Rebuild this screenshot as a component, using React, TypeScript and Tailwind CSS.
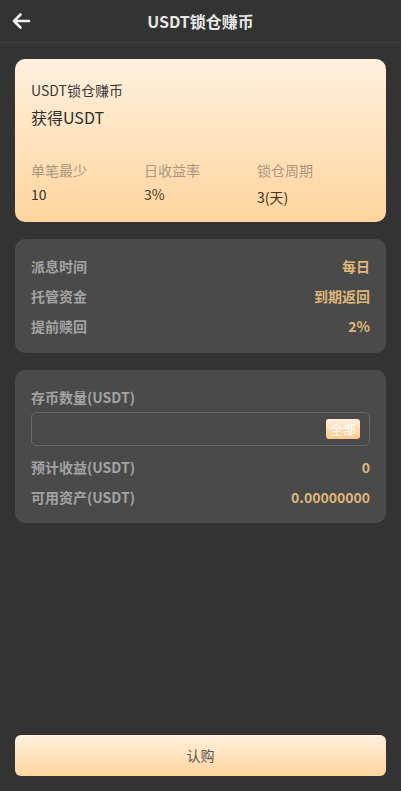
import React from "react";

export default function App() {
  const font = { fontFamily: '"Noto Sans CJK SC", "Noto Sans", sans-serif' };
  return (
    <div style={font} className="w-[401px] h-[791px] bg-[#333333] flex flex-col">
      <div className="relative h-[43px] border-b border-[#3f3f3f] flex items-center justify-center shrink-0">
        <svg className="absolute left-[11px] top-[12px]" width="20" height="18" viewBox="0 0 20 18" fill="none">
          <path d="M18 9H3M9.5 2.5L3 9l6.5 6.5" stroke="#f0f0f0" strokeWidth="2.6" strokeLinecap="round" strokeLinejoin="round" />
        </svg>
        <span className="text-[16px] font-bold text-[#e6e6e6] leading-none">USDT锁仓赚币</span>
      </div>

      <div className="mx-[15px] mt-[16px] h-[163px] rounded-[10px] bg-gradient-to-b from-[#fff0de] to-[#ffd59c] px-4 pt-[21px]">
        <div className="text-[14px] leading-[20px] text-[#3a3a3a]">USDT锁仓赚币</div>
        <div className="text-[16px] leading-[22px] text-[#2e2e2e] mt-[6px]">获得USDT</div>
        <div className="grid grid-cols-3 mt-[32px]">
          <div>
            <div className="text-[14px] leading-[20px] text-[#a89783]">单笔最少</div>
            <div className="text-[14px] leading-[20px] text-[#3b2f3a] mt-[4px]">10</div>
          </div>
          <div>
            <div className="text-[14px] leading-[20px] text-[#a89783]">日收益率</div>
            <div className="text-[14px] leading-[20px] text-[#4a3b2f] mt-[4px]">3%</div>
          </div>
          <div>
            <div className="text-[14px] leading-[20px] text-[#a89783]">锁仓周期</div>
            <div className="text-[14px] leading-[20px] text-[#3f3224] mt-[7px]">3(天)</div>
          </div>
        </div>
      </div>

      <div className="mx-[15px] mt-[17px] rounded-[10px] bg-[#4a4a4a] px-4 py-3">
        {[
          ["派息时间", "每日"],
          ["托管资金", "到期返回"],
          ["提前赎回", "2%"],
        ].map(([l, v]) => (
          <div key={l} className="h-[30px] flex items-center justify-between">
            <span className="text-[14px] font-bold text-[#a3a3a3]">{l}</span>
            <span className="text-[14px] font-bold text-[#dfb679]">{v}</span>
          </div>
        ))}
      </div>

      <div className="mx-[15px] mt-[17px] rounded-[10px] bg-[#4a4a4a] px-4 pt-3 pb-[11px]">
        <div className="h-[30px] flex items-center">
          <span className="text-[14px] font-bold text-[#a3a3a3]">存币数量(USDT)</span>
        </div>
        <div className="h-[34px] rounded-[5px] border border-[#686868] flex items-center justify-end pr-[9px]">
          <span className="h-[20px] w-[34px] rounded-[3px] bg-gradient-to-b from-[#fff0de] to-[#ffc98a] text-white text-[13px] leading-[20px] text-center">全部</span>
        </div>
        <div className="h-[30px] flex items-center justify-between mt-[6px]">
          <span className="text-[14px] font-bold text-[#a3a3a3]">预计收益(USDT)</span>
          <span className="text-[14px] font-bold text-[#dfb679]">0</span>
        </div>
        <div className="h-[30px] flex items-center justify-between">
          <span className="text-[14px] font-bold text-[#a3a3a3]">可用资产(USDT)</span>
          <span className="text-[14px] font-bold text-[#dfb679]">0.00000000</span>
        </div>
      </div>

      <button className="mt-auto mb-[15px] mx-[15px] h-[41px] rounded-[6px] bg-gradient-to-b from-[#fff0de] to-[#ffd59c] text-[14px] text-[#555555]">
        认购
      </button>
    </div>
  );
}
